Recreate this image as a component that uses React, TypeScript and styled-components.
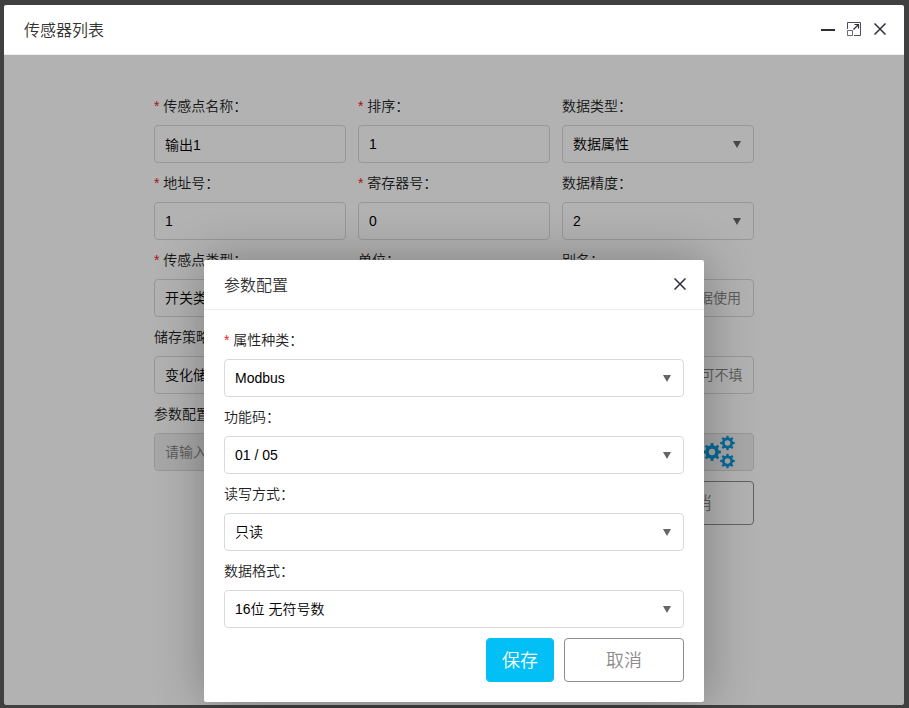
import React, { useId } from "react";
import styled, { createGlobalStyle } from "styled-components";

const GlobalStyle = createGlobalStyle`
  *, *::before, *::after { box-sizing: border-box; }
  body { margin: 0; background: #404040; }
  body, input, select, button {
    font-family: "Liberation Sans", "Noto Sans CJK SC", sans-serif;
    font-size: 14px;
    font-weight: 350;
  }
`;

const Desktop = styled.main`
  display: flex;
  min-height: 100vh;
  padding: 5px 5px 3px 4px;
`;

const Window = styled.section`
  flex: 1;
  display: flex;
  flex-direction: column;
  background: #fff;
  border-radius: 2px;
`;

const TitleBar = styled.header`
  display: flex;
  align-items: center;
  justify-content: space-between;
  height: 50px;
  padding: 0 16px 2px 20px;
  border-bottom: 1px solid #eee;
`;

const Title = styled.h2`
  margin: 0;
  font-size: 16px;
  font-weight: 350;
  color: #333;
`;

const WindowActions = styled.div`
  display: flex;
  gap: 10px;
`;

const IconButton = styled.button`
  display: grid;
  place-items: center;
  width: 16px;
  height: 16px;
  padding: 0;
  border: 0;
  background: none;
  color: #2e2d3c;
  cursor: pointer;
`;

const WindowBody = styled.div`
  flex: 1;
  display: grid;
`;

const FormArea = styled.div`
  grid-area: 1 / 1;
  padding: 31px 20px 20px;
`;

const SensorForm = styled.form`
  max-width: 600px;
  margin: 0 auto;
`;

const Columns = styled.div`
  display: grid;
  grid-template-columns: repeat(3, 1fr);
  column-gap: 12px;
`;

const FieldBox = styled.div`
  min-width: 0;
`;

const Label = styled.label`
  display: block;
  line-height: 41px;
  height: 39px;
  color: #222;
  white-space: nowrap;
`;

const Required = styled.span`
  color: #f01818;
`;

const Control = styled.div`
  position: relative;
  height: 38px;
`;

const TextInput = styled.input`
  width: 100%;
  height: 38px;
  padding: 0 10px;
  border: 1px solid #d9d9d9;
  border-radius: 4px;
  background: #fff;
  color: #000;
  outline: none;

  &::placeholder {
    color: #808080;
    opacity: 1;
  }

  &:disabled { background: #f0f0f0; }
`;

const SelectInput = styled.select`
  appearance: none;
  width: 100%;
  height: 38px;
  padding: 0 30px 0 10px;
  border: 1px solid #d9d9d9;
  border-radius: 4px;
  background: #fff;
  color: #000;
  outline: none;
`;

const Arrow = styled.svg`
  position: absolute;
  right: 13px;
  top: 16px;
  pointer-events: none;
`;

const GearButton = styled.button`
  position: absolute;
  right: 18px;
  top: 2px;
  padding: 0;
  border: 0;
  background: none;
  color: #0898dc;
  line-height: 0;
  cursor: pointer;
`;

const Actions = styled.div`
  display: flex;
  justify-content: flex-end;
  gap: 10px;
  margin-top: 10px;
`;

const ActionButton = styled.button<{ $primary?: boolean }>`
  width: ${(p) => (p.$primary ? "68px" : "120px")};
  height: 44px;
  padding: 0 0 2px;
  border: 1px solid ${(p) => (p.$primary ? "#02c0f5" : "#8c8c8c")};
  border-radius: 4px;
  background: ${(p) => (p.$primary ? "#02c0f5" : "#fff")};
  color: ${(p) => (p.$primary ? "#fff" : "#8c8c8c")};
  font-size: 18px;
  cursor: pointer;
`;

const Mask = styled.div`
  grid-area: 1 / 1;
  z-index: 1;
  display: flex;
  justify-content: center;
  align-items: flex-start;
  padding: 205px 20px 3px;
  background: rgba(0, 0, 0, 0.3);
`;

const Dialog = styled.section`
  width: 100%;
  max-width: 500px;
  background: #fff;
  border-radius: 2px;
  box-shadow: 1px 1px 50px rgba(0, 0, 0, 0.3);
`;

const DialogForm = styled.form`
  padding: 10px 20px 20px;
`;

const CloseIcon = () => (
  <svg width="12" height="12" viewBox="0 0 12 12" fill="none" stroke="currentColor" strokeWidth="1.5">
    <path d="M.5.5l11 11M11.5.5l-11 11" />
  </svg>
);

const MinimizeIcon = () => (
  <svg width="14" height="14" viewBox="0 0 14 14">
    <path d="M0 7h14v2H0z" fill="currentColor" />
  </svg>
);

const ExpandIcon = () => (
  <svg width="14" height="14" viewBox="0 0 14 14" fill="none" stroke="currentColor">
    <path d="M.5 7V.5h13v13H7" strokeOpacity=".85" />
    <path d="M.5 8.5h5v5h-5z" strokeOpacity=".7" />
    <path d="M6.5 7.5l5-5M7.5 2.5h4v4" strokeWidth="1.2" />
  </svg>
);

const gearPath = (cx: number, cy: number, outer: number, root: number, hole: number) => {
  const teeth = 8;
  const step = (Math.PI * 2) / teeth;
  const at = (r: number, a: number) =>
    `${(cx + r * Math.sin(a)).toFixed(2)} ${(cy - r * Math.cos(a)).toFixed(2)}`;
  let d = "";
  for (let i = 0; i < teeth; i++) {
    const a = i * step;
    d += `${i ? "L" : "M"}${at(root, a - step * 0.27)}L${at(outer, a - step * 0.18)}L${at(outer, a + step * 0.18)}L${at(root, a + step * 0.27)}`;
  }
  return `${d}ZM${cx - hole} ${cy}a${hole} ${hole} 0 1 0 ${hole * 2} 0a${hole} ${hole} 0 1 0 ${-hole * 2} 0Z`;
};

const GearsIcon = () => (
  <svg width="34" height="34" viewBox="0 0 34 34" fill="currentColor" fillRule="evenodd">
    <path d={gearPath(10, 17, 9, 6.9, 3.2)} />
    <path d={gearPath(25.5, 8, 7.4, 5.6, 2.8)} />
    <path d={gearPath(25.5, 26, 7.4, 5.6, 2.8)} />
  </svg>
);

interface FieldProps {
  label: string;
  required?: boolean;
  value?: string;
  placeholder?: string;
  disabled?: boolean;
  options?: string[];
  children?: React.ReactNode;
}

function Field({ label, required, value, placeholder, disabled, options, children }: FieldProps) {
  const id = useId();
  return (
    <FieldBox>
      <Label htmlFor={id}>
        {required && <Required>* </Required>}
        {label}：
      </Label>
      <Control>
        {options ? (
          <>
            <SelectInput id={id} defaultValue={options[0]}>
              {options.map((o) => (
                <option key={o}>{o}</option>
              ))}
            </SelectInput>
            <Arrow width="8" height="7" viewBox="0 0 8 7" aria-hidden="true">
              <path d="M0 0h8L4 7z" fill="#666" />
            </Arrow>
          </>
        ) : (
          <TextInput id={id} defaultValue={value} placeholder={placeholder} disabled={disabled} />
        )}
        {children}
      </Control>
    </FieldBox>
  );
}

export default function App() {
  return (
    <>
      <GlobalStyle />
      <Desktop>
        <Window>
          <TitleBar>
            <Title>传感器列表</Title>
            <WindowActions>
              <IconButton aria-label="最小化"><MinimizeIcon /></IconButton>
              <IconButton aria-label="最大化"><ExpandIcon /></IconButton>
              <IconButton aria-label="关闭"><CloseIcon /></IconButton>
            </WindowActions>
          </TitleBar>
          <WindowBody>
            <FormArea>
              <SensorForm onSubmit={(e) => e.preventDefault()}>
                <Columns>
                  <Field label="传感点名称" required value="输出1" />
                  <Field label="排序" required value="1" />
                  <Field label="数据类型" options={["数据属性"]} />
                  <Field label="地址号" required value="1" />
                  <Field label="寄存器号" required value="0" />
                  <Field label="数据精度" options={["2"]} />
                  <Field label="传感点类型" required options={["开关类型"]} />
                  <Field label="单位" />
                  <Field label="别名" placeholder="可提供第三方接口数据使用" />
                  <Field label="储存策略" options={["变化储存"]} />
                  <Field label="间隔" />
                  <Field label="公式" placeholder="最多输入10个字符，可不填" />
                </Columns>
                <Field label="参数配置" placeholder="请输入" disabled>
                  <GearButton type="button" aria-label="参数配置"><GearsIcon /></GearButton>
                </Field>
                <Actions>
                  <ActionButton $primary>保存</ActionButton>
                  <ActionButton type="button">取消</ActionButton>
                </Actions>
              </SensorForm>
            </FormArea>
            <Mask>
              <Dialog role="dialog" aria-label="参数配置">
                <TitleBar>
                  <Title>参数配置</Title>
                  <IconButton aria-label="关闭"><CloseIcon /></IconButton>
                </TitleBar>
                <DialogForm onSubmit={(e) => e.preventDefault()}>
                  <Field label="属性种类" required options={["Modbus"]} />
                  <Field label="功能码" options={["01 / 05"]} />
                  <Field label="读写方式" options={["只读"]} />
                  <Field label="数据格式" options={["16位 无符号数"]} />
                  <Actions>
                    <ActionButton $primary>保存</ActionButton>
                    <ActionButton type="button">取消</ActionButton>
                  </Actions>
                </DialogForm>
              </Dialog>
            </Mask>
          </WindowBody>
        </Window>
      </Desktop>
    </>
  );
}
